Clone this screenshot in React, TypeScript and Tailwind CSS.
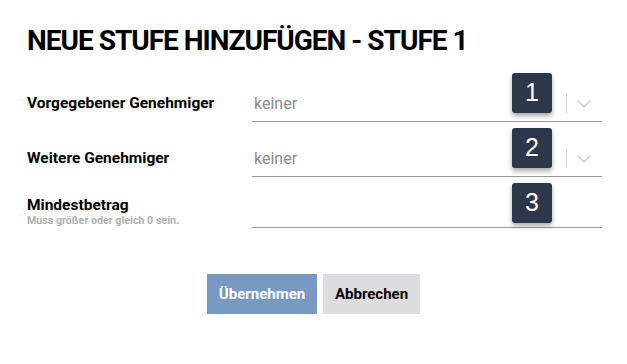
import { ChevronDown } from 'lucide-react'

const FONT = "font-['Roboto',_'Liberation_Sans',_sans-serif]"

function Badge({ n, top }: { n: number; top: string }) {
  return (
    <div className={`absolute right-[50px] ${top} w-[40px] h-[40px] rounded-[3px] bg-[#2c374a] shadow-[0_3px_5px_rgba(0,0,0,0.35)] flex items-center justify-center text-white text-[25px] font-['Liberation_Sans',_sans-serif]`}>
      {n}
    </div>
  )
}

function Field({ placeholder, select, badge, badgeTop }: { placeholder?: string; select?: boolean; badge: number; badgeTop: string }) {
  return (
    <div className="relative flex-1 h-[36px] flex items-center border-b border-[#9a9a9a]">
      <span className="pl-[2px] text-[16px] text-[#8a8a8a]">{placeholder}</span>
      {select && (
        <div className="ml-auto flex items-center">
          <span className="w-px h-[19px] bg-[#d4d4d4]" />
          <ChevronDown className="ml-[5px] mr-[6px] w-[24px] h-[24px] text-[#c8c8c8]" strokeWidth={1.2} />
        </div>
      )}
      <Badge n={badge} top={badgeTop} />
    </div>
  )
}

export default function App() {
  return (
    <div className={`${FONT} w-[627px] h-[364px] bg-white pl-[27px] pr-[25px] pt-[27px]`}>
      <h1 className="text-[28px] leading-[28px] font-bold text-black tracking-[-1px]">
        NEUE STUFE HINZUFÜGEN - STUFE 1
      </h1>

      <div className="mt-[31px] flex items-center">
        <label className="w-[225px] text-[15.5px] font-bold text-black">Vorgegebener Genehmiger</label>
        <Field placeholder="keiner" select badge={1} badgeTop="top-[-13px]" />
      </div>

      <div className="mt-[19px] flex items-center">
        <label className="w-[225px] text-[15.5px] font-bold text-black">Weitere Genehmiger</label>
        <Field placeholder="keiner" select badge={2} badgeTop="top-[-13px]" />
      </div>

      <div className="mt-[15px] flex items-end">
        <div className="w-[225px] flex flex-col pb-[1px]">
          <label className="text-[15.5px] leading-[18px] font-bold text-black">Mindestbetrag</label>
          <span className="text-[10.7px] leading-[13px] font-bold text-[#b0b0b0]">Muss größer oder gleich 0 sein.</span>
        </div>
        <Field badge={3} badgeTop="top-[-9px]" />
      </div>

      <div className="mt-[46px] flex justify-center gap-[6px] pr-[2px]">
        <button className="w-[110px] h-[40px] bg-[#7799c2] text-white text-[15px] font-bold">Übernehmen</button>
        <button className="w-[97px] h-[40px] bg-[#dcdddf] text-black text-[15px] font-bold">Abbrechen</button>
      </div>
    </div>
  )
}
